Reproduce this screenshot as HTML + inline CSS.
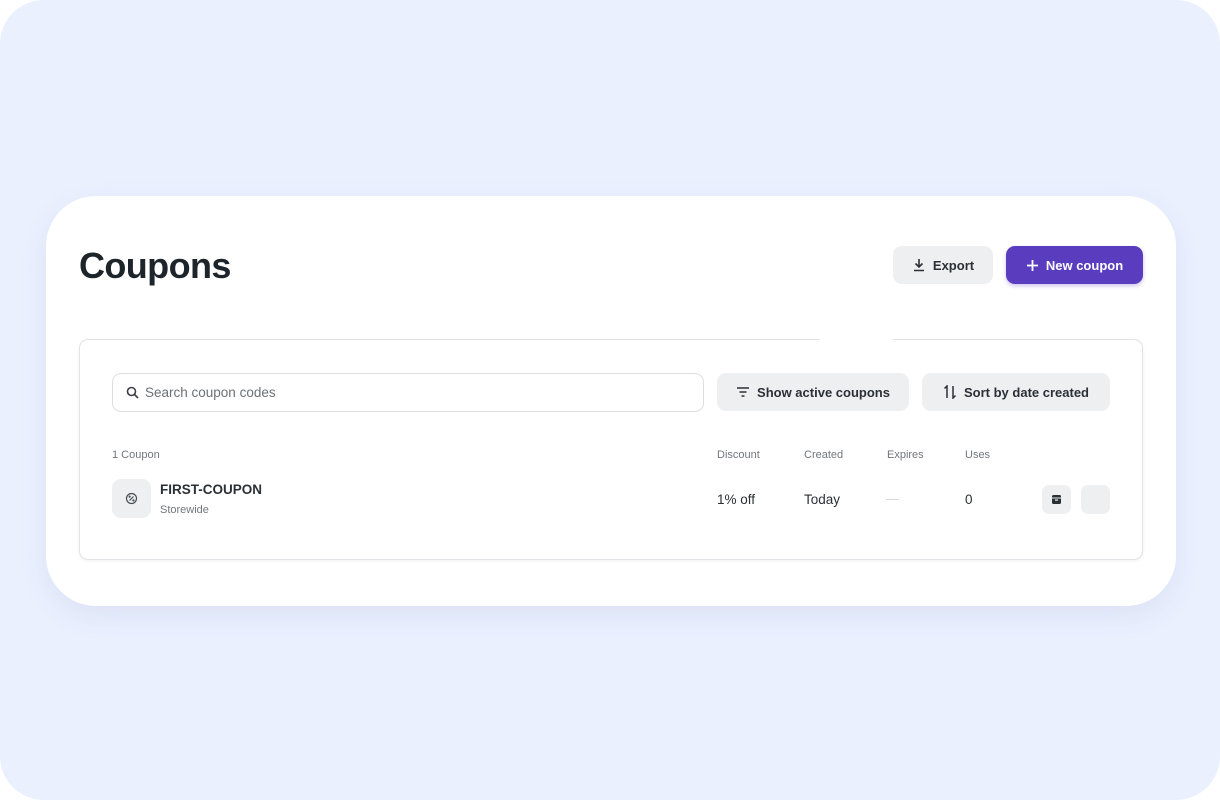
<!DOCTYPE html>
<html><head><style>
*{box-sizing:border-box;margin:0;padding:0}
html,body{width:1220px;height:800px;background:#fff;overflow:hidden}
body{font-family:"Liberation Sans",sans-serif;color:#1f2429}
.bg{position:absolute;left:0;top:0;width:1220px;height:800px;background:#eaf0fe;border-radius:44px}
.card{position:absolute;left:46px;top:196px;width:1130px;height:410px;background:#fff;border-radius:50px;box-shadow:0 10px 30px rgba(60,80,140,.08)}
h1{position:absolute;left:79px;top:245px;font-size:36px;font-weight:bold;color:#1d252b;letter-spacing:-.6px}
.btn{position:absolute;height:38px;border-radius:9px;background:#eeeff1;font-size:13px;font-weight:bold;color:#2b3036;display:flex;align-items:center;justify-content:center;gap:7px}
.panel{position:absolute;left:79px;top:339px;width:1064px;height:221px;border:1px solid #e2e3e6;border-radius:9px;box-shadow:0 1px 3px rgba(0,0,0,.06)}
.gap{position:absolute;left:820px;top:336px;width:73px;height:5px;background:#fff}
.search{position:absolute;left:112px;top:373px;width:592px;height:39px;border:1px solid #dcdee1;border-radius:9px;display:flex;align-items:center;padding-left:13px;gap:6px;font-size:13.5px;color:#6b7177}
.th{position:absolute;top:449px;font-size:11px;color:#72777d}
.td{position:absolute;top:492px;font-size:13.5px;color:#2b3036}
.sq{position:absolute;background:#eeeff1;border-radius:7px}
</style></head><body>
<div class="bg"></div>
<div class="card"></div>
<h1>Coupons</h1>
<div class="btn" style="left:893px;top:246px;width:100px">
<svg width="14" height="14" viewBox="0 0 14 14" fill="none" stroke="#2b3036" stroke-width="1.6"><path d="M7 1v8M3.5 5.5L7 9l3.5-3.5M2 12.5h10"/></svg>Export</div>
<div class="btn" style="left:1006px;top:246px;width:137px;background:#5a3dbf;color:#fff;box-shadow:0 2px 4px rgba(90,61,191,.3)">
<svg width="13" height="13" viewBox="0 0 13 13" stroke="#fff" stroke-width="1.8"><path d="M6.5 1v11M1 6.5h11"/></svg>New coupon</div>
<div class="panel"></div>
<div class="gap"></div>
<div class="search"><svg width="13" height="13" viewBox="0 0 13 13" fill="none" stroke="#3a3f45" stroke-width="1.6"><circle cx="5.5" cy="5.5" r="4"/><path d="M8.5 8.5L12 12"/></svg>Search coupon codes</div>
<div class="btn" style="left:717px;top:373px;width:192px;height:38px">
<svg width="14" height="12" viewBox="0 0 14 12" stroke="#2b3036" stroke-width="1.5"><path d="M1 2h12M3.5 6h7M5.5 10h3"/></svg>Show active coupons</div>
<div class="btn" style="left:922px;top:373px;width:188px;height:38px">
<svg width="14" height="14" viewBox="0 0 14 14" fill="none" stroke="#2b3036" stroke-width="1.5"><path d="M4 13V1L1.5 3.5M10 1v12l2.5-2.5"/></svg>Sort by date created</div>
<div class="th" style="left:112px">1 Coupon</div>
<div class="th" style="left:717px">Discount</div>
<div class="th" style="left:804px">Created</div>
<div class="th" style="left:887px">Expires</div>
<div class="th" style="left:965px">Uses</div>
<div class="sq" style="left:112px;top:479px;width:39px;height:39px;border-radius:9px"></div>
<svg style="position:absolute;left:125px;top:492px" width="13" height="13" viewBox="0 0 13 13" fill="none" stroke="#4a4f55" stroke-width="1.2"><circle cx="6.5" cy="6.5" r="5"/><path d="M4.5 8.5l4-4"/><circle cx="4.6" cy="4.6" r=".5"/><circle cx="8.4" cy="8.4" r=".5"/></svg>
<div style="position:absolute;left:160px;top:482px;font-size:13.5px;font-weight:bold;color:#2b3036">FIRST-COUPON</div>
<div style="position:absolute;left:160px;top:504px;font-size:11px;color:#72777d">Storewide</div>
<div class="td" style="left:717px">1% off</div>
<div class="td" style="left:804px">Today</div>
<div style="position:absolute;left:886px;top:499px;width:13px;height:1px;background:#d6d8db"></div>
<div class="td" style="left:965px">0</div>
<div class="sq" style="left:1042px;top:485px;width:29px;height:29px"></div>
<svg style="position:absolute;left:1051px;top:494px" width="11" height="11" viewBox="0 0 11 11"><rect x="1" y="1" width="9" height="9" rx="1.5" fill="#2b3036"/><path d="M1 4h9" stroke="#eeeff1" stroke-width="1"/><rect x="4" y="5.5" width="3" height="1.2" fill="#eeeff1"/></svg>
<div class="sq" style="left:1081px;top:485px;width:29px;height:29px"></div>
</body></html>
